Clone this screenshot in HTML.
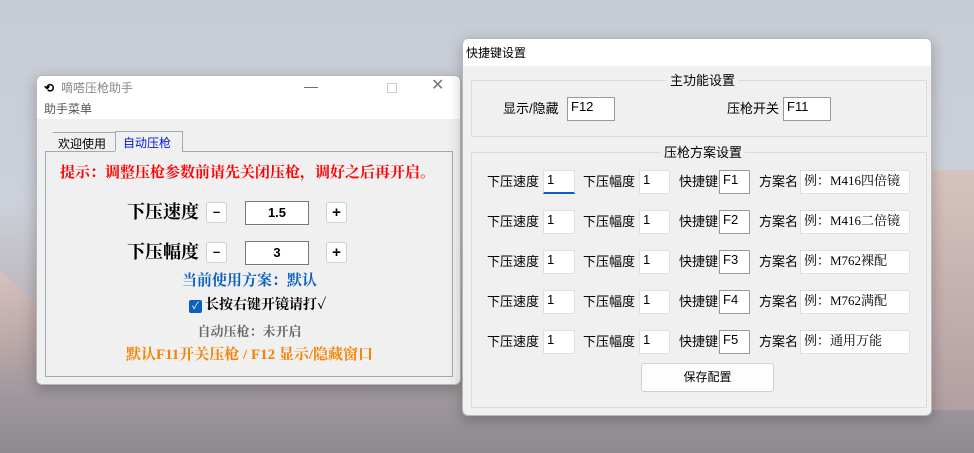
<!DOCTYPE html>
<html><head><meta charset="utf-8"><style>
*{margin:0;padding:0;box-sizing:border-box}
body{width:974px;height:453px;overflow:hidden;position:relative;font-family:"Liberation Sans","Noto Sans CJK SC",sans-serif;font-size:13px;line-height:18px;color:#000;
background:linear-gradient(180deg,#c7ccd5 0%,#ccd0d8 45%,#b9b3b8 70%,#a29ba0 85%,#8e8a90 100%)}
.a{position:absolute}
.win{position:absolute;background:#f0f0f0;border:1px solid #b8b8b8;border-radius:6px;overflow:hidden;box-shadow:0 4px 14px rgba(0,0,0,.25)}
.inp{position:absolute;background:#fff;border:1px solid #c8c8c8;border-bottom:1px solid #888;font-size:13px;padding:2px 3px;line-height:14px}
.serif{font-family:"Liberation Serif","Noto Serif CJK SC",serif}
.btn{position:absolute;background:#fdfdfd;border:1px solid #d0d0d0;border-radius:3px;text-align:center;font-weight:bold}
.grp{position:absolute;border:1px solid #dcdcdc}
.gt{position:absolute;background:#f0f0f0;padding:0 3px;font-size:13px}
</style></head><body>
<div class="a" style="left:0;top:270px;width:60px;height:100px;background:linear-gradient(160deg,#d8c2be,#a8999c);clip-path:polygon(0 0,100% 55%,100% 100%,0 100%)"></div>
<div class="a" style="left:930px;top:170px;width:44px;height:240px;background:linear-gradient(180deg,#d7c3be,#b29fa1)"></div>

<div class="win" style="left:36px;top:75px;width:425px;height:310px">
 <div class="a" style="left:0;top:0;width:425px;height:43px;background:#fff"></div>
 <div class="a" style="left:7px;top:3px;font-size:12px;font-weight:bold">⟲</div>
 <div class="a" style="left:24px;top:3px;font-size:12px;color:#888">嘀嗒压枪助手</div>
 <div class="a" style="left:267px;top:1px;color:#666;font-size:14px">—</div>
 <div class="a" style="left:350px;top:7px;width:10px;height:10px;border:1px solid #ccc"></div>
 <div class="a" style="left:394px;top:1px;color:#777;font-size:16px">✕</div>
 <div class="a" style="left:7px;top:24px;font-size:12px;color:#555">助手菜单</div>
 <div class="a" style="left:8px;top:56px;width:72px;height:20px;background:#f0f0f0;font-size:12px;padding:2px 0 0 13px;clip-path:polygon(8px 0,100% 0,100% 100%,0 100%);border-top:1px solid #a0aab4">欢迎使用</div>
 <div class="a" style="left:78px;top:55px;width:68px;height:21px;border:1px solid #a0aab4;border-bottom:none;background:#f0f0f0;font-size:12px;color:#0018d8;padding:2px 0 0 7px">自动压枪</div>
 <div class="a" style="left:8px;top:75px;width:408px;height:226px;border:1px solid #a0aab4"></div>
 <div class="a" style="left:78px;top:75px;width:67px;height:2px;background:#f0f0f0"></div>
 <div class="a serif" style="left:23px;top:88px;font-size:15px;font-weight:bold;color:#f00;white-space:nowrap">提示：调整压枪参数前请先关闭压枪，调好之后再开启。</div>
 <div class="a serif" style="left:90px;top:125px;font-size:18px;line-height:22px;font-weight:bold">下压速度</div>
 <div class="btn" style="left:169px;top:126px;width:21px;height:21px;font-size:13px;line-height:18px">–</div>
 <div class="a" style="left:208px;top:125px;width:64px;height:24px;border:1px solid #777;background:#fff;text-align:center;font-weight:bold;font-size:13px;line-height:22px">1.5</div>
 <div class="btn" style="left:289px;top:126px;width:21px;height:21px;font-size:15px;line-height:19px">+</div>
 <div class="a serif" style="left:90px;top:165px;font-size:18px;line-height:22px;font-weight:bold">下压幅度</div>
 <div class="btn" style="left:169px;top:166px;width:21px;height:21px;font-size:13px;line-height:18px">–</div>
 <div class="a" style="left:208px;top:165px;width:64px;height:24px;border:1px solid #777;background:#fff;text-align:center;font-weight:bold;font-size:13px;line-height:22px">3</div>
 <div class="btn" style="left:289px;top:166px;width:21px;height:21px;font-size:15px;line-height:19px">+</div>
 <div class="a serif" style="left:0;width:425px;text-align:center;top:196px;font-size:15px;font-weight:bold;color:#0a5fc0">当前使用方案：默认</div>
 <div class="a" style="left:152px;top:224px;width:13px;height:13px;background:#0a5fc0;border-radius:2px;color:#fff;font-size:10px;line-height:13px;text-align:center">✓</div>
 <div class="a serif" style="left:168px;top:221px;font-size:14px;font-weight:bold">长按右键开镜请打✓</div>
 <div class="a serif" style="left:0;width:425px;text-align:center;top:247px;font-size:13px;font-weight:bold;color:#666">自动压枪：未开启</div>
 <div class="a serif" style="left:0;width:425px;text-align:center;top:270px;font-size:15px;font-weight:bold;color:#f58200">默认F11开关压枪 / F12 显示/隐藏窗口</div>
</div>

<div class="win" style="left:462px;top:38px;width:470px;height:378px">
 <div class="a" style="left:0;top:0;width:470px;height:27px;background:#fff"></div>
 <div class="a" style="left:3px;top:5px;font-size:12px">快捷键设置</div>
 <div class="grp" style="left:8px;top:41px;width:456px;height:57px"></div>
 <div class="gt" style="left:204px;top:33px">主功能设置</div>
 <div class="a" style="left:40px;top:61px">显示/隐藏</div>
 <div class="inp" style="left:104px;top:58px;width:48px;height:24px;border:1px solid #999">F12</div>
 <div class="a" style="left:264px;top:61px">压枪开关</div>
 <div class="inp" style="left:320px;top:58px;width:48px;height:24px;border:1px solid #999">F11</div>
 <div class="grp" style="left:8px;top:113px;width:456px;height:256px"></div>
 <div class="gt" style="left:198px;top:105px">压枪方案设置</div>
 <div id="rows"></div>
 <div class="a" style="left:178px;top:324px;width:133px;height:29px;background:#fdfdfd;border:1px solid #d0d0d0;border-radius:3px;text-align:center;line-height:27px;font-size:12px">保存配置</div>
</div>
<script>
var names=["例：M416四倍镜","例：M416二倍镜","例：M762裸配","例：M762满配","例：通用万能"],h="";
for(var i=0;i<5;i++){var t=131+i*40;
h+='<div class="a" style="left:24px;top:'+(t+3)+'px">下压速度</div>';
h+='<div class="inp" style="left:80px;top:'+t+'px;width:32px;height:24px;border-color:#e0e0e0;'+(i==0?'border-bottom:2px solid #0a5fc0':'')+'">1</div>';
h+='<div class="a" style="left:120px;top:'+(t+3)+'px">下压幅度</div>';
h+='<div class="inp" style="left:176px;top:'+t+'px;width:31px;height:24px;border-color:#e0e0e0">1</div>';
h+='<div class="a" style="left:216px;top:'+(t+3)+'px">快捷键</div>';
h+='<div class="inp" style="left:256px;top:'+t+'px;width:31px;height:24px;border:1px solid #999">F'+(i+1)+'</div>';
h+='<div class="a" style="left:296px;top:'+(t+3)+'px">方案名</div>';
h+='<div class="inp serif" style="left:337px;top:'+t+'px;width:110px;height:24px;border-color:#e0e0e0;line-height:16px">'+names[i]+'</div>';}
document.getElementById("rows").innerHTML=h;
</script>
</body></html>
